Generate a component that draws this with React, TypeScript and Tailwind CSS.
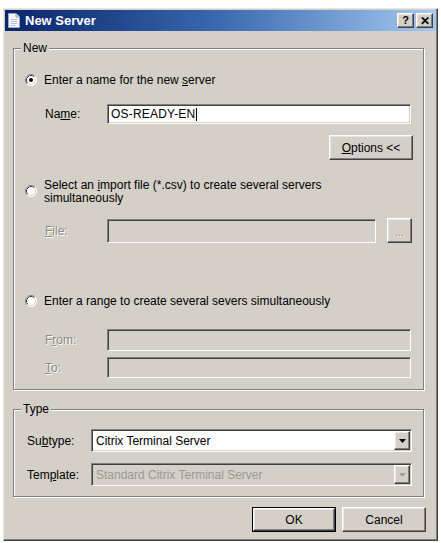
import React from 'react'

// classic 3D edge styles
const sunken =
  'border border-t-[#808080] border-l-[#808080] border-b-white border-r-white shadow-[inset_1px_1px_0_#404040,inset_-1px_-1px_0_#d4d0c8]'
const raised =
  'border border-t-white border-l-white border-b-[#404040] border-r-[#404040] shadow-[inset_-1px_-1px_0_#808080,inset_1px_1px_0_#e8e6e2]'
const grayed = 'text-[#8c8a85] [text-shadow:1px_1px_0_#ffffff]'

function Radio({ checked = false }: { checked?: boolean }) {
  return (
    <svg width="12" height="12" viewBox="0 0 12 12" className="shrink-0">
      <circle cx="6" cy="6" r="5.5" fill="#ffffff" />
      <path d="M9.89 2.11 A5.5 5.5 0 0 0 2.11 9.89" fill="none" stroke="#808080" />
      <path d="M9.18 2.82 A4.5 4.5 0 0 0 2.82 9.18" fill="none" stroke="#404040" />
      <path d="M2.11 9.89 A5.5 5.5 0 0 0 9.89 2.11" fill="none" stroke="#ffffff" />
      <path d="M2.82 9.18 A4.5 4.5 0 0 0 9.18 2.82" fill="none" stroke="#d4d0c8" />
      {checked && <circle cx="6" cy="6" r="2" fill="#000000" />}
    </svg>
  )
}

function DownArrow({ disabled = false }: { disabled?: boolean }) {
  return (
    <svg width="7" height="4" viewBox="0 0 7 4">
      <polygon points="0,0 7,0 3.5,4" fill={disabled ? '#a09e99' : '#000000'} />
    </svg>
  )
}

function GroupBox({ label, className, children }: { label: string; className: string; children: React.ReactNode }) {
  return (
    <div className={`relative w-[411px] border border-[#808080] shadow-[inset_1px_1px_0_#ffffff,1px_1px_0_#ffffff] ${className}`}>
      <span className="absolute left-[7px] -top-[8px] bg-[#d4d0c8] px-[2px] leading-[14px]">{label}</span>
      {children}
    </div>
  )
}

function ComboBox({ value, disabled = false }: { value: string; disabled?: boolean }) {
  return (
    <div className={`flex h-[23px] w-[321px] ${sunken} ${disabled ? 'bg-[#d4d0c8]' : 'bg-white'} p-[1px]`}>
      <span className={`flex flex-1 items-center pl-[3px] ${disabled ? 'text-[#9a9893]' : 'text-black'}`}>{value}</span>
      <span className={`flex w-[16px] items-center justify-center bg-[#d4d0c8] ${raised}`}>
        <DownArrow disabled={disabled} />
      </span>
    </div>
  )
}

function DocIcon() {
  return (
    <svg width="12" height="15" viewBox="0 0 12 15" className="shrink-0">
      <path d="M0.5 0.5 H8 L11.5 4 V14.5 H0.5 Z" fill="#f4f6fb" stroke="#9aa7c4" />
      <path d="M8 0.5 V4 H11.5" fill="#d6dcea" stroke="#9aa7c4" />
      <path d="M2.5 6.5 H9.5 M2.5 8.5 H9.5 M2.5 10.5 H9.5 M2.5 12.5 H7.5" stroke="#b8c2da" />
    </svg>
  )
}

export default function App() {
  return (
    <div className="h-[543px] w-[441px] bg-white pl-[3px] pt-[8px] font-['Liberation_Sans',Arial,sans-serif] text-[12px] text-black">
      <div className="flex h-[533px] w-[435px] flex-col border border-t-[#e8e6e2] border-l-[#e8e6e2] border-b-[#404040] border-r-[#404040] bg-[#d4d0c8] p-[1px] shadow-[inset_-1px_-1px_0_#808080]">
        {/* caption */}
        <div className="flex h-[21px] items-center bg-linear-to-r from-[#0a246a] via-[#3a6ab0] to-[#a6caf0] pl-[3px] pr-[3px]">
          <DocIcon />
          <span className="ml-[5px] text-[13px] font-bold text-white">New Server</span>
          <div className="ml-auto flex gap-[2px]">
            <span className={`flex h-[15px] w-[17px] items-center justify-center bg-[#d4d0c8] text-[11px] font-bold ${raised}`}>?</span>
            <span className={`flex h-[15px] w-[17px] items-center justify-center bg-[#d4d0c8] text-[12px] font-bold ${raised}`}>✕</span>
          </div>
        </div>

        {/* body */}
        <div className="flex flex-col pl-[8px]">
          <GroupBox label="New" className="mt-[17px] pb-[11px] pt-[23px]">
            <div className="flex h-[16px] items-center gap-[7px] pl-[11px]">
              <Radio checked />
              <span>Enter a name for the new <u>s</u>erver</span>
            </div>

            <div className="mt-[16px] flex h-[20px] items-center pl-[31px]">
              <span className="w-[62px]">Na<u>m</u>e:</span>
              <div className={`flex h-[20px] w-[304px] items-center bg-white pl-[3px] ${sunken}`}>
                <span className="tracking-[0.2px]">OS-READY-EN</span>
                <span className="ml-[1px] h-[13px] w-[1px] bg-black" />
              </div>
            </div>

            <div className="mt-[11px] flex justify-end pr-[10px]">
              <button className={`flex h-[25px] w-[84px] items-center justify-center bg-[#d4d0c8] ${raised}`}>
                <span><u>O</u>ptions &lt;&lt;</span>
              </button>
            </div>

            <div className="mt-[19px] flex items-start gap-[7px] pl-[11px]">
              <span className="mt-[6px]"><Radio /></span>
              <span className="leading-[13px]">
                Select an <u>i</u>mport file (*.csv) to create several servers
                <br />
                simultaneously
              </span>
            </div>

            <div className="mt-[13px] flex h-[25px] items-center pl-[31px]">
              <span className={`w-[62px] ${grayed}`}><u>F</u>ile:</span>
              <div className={`h-[24px] w-[269px] bg-[#d4d0c8] ${sunken}`} />
              <button className={`ml-[11px] flex h-[25px] w-[25px] items-end justify-center bg-[#d4d0c8] pb-[4px] text-[10px] leading-[10px] ${raised} ${grayed}`}>
                ...
              </button>
            </div>

            <div className="mt-[50px] flex h-[16px] items-center gap-[7px] pl-[11px]">
              <Radio />
              <span>Enter a ran<u>g</u>e to create several severs simultaneously</span>
            </div>

            <div className="mt-[20px] flex h-[22px] items-center pl-[31px]">
              <span className={`w-[62px] ${grayed}`}>F<u>r</u>om:</span>
              <div className={`h-[22px] w-[304px] bg-[#d4d0c8] ${sunken}`} />
            </div>

            <div className="mt-[6px] flex h-[21px] items-center pl-[31px]">
              <span className={`w-[62px] ${grayed}`}><u>T</u>o:</span>
              <div className={`h-[21px] w-[304px] bg-[#d4d0c8] ${sunken}`} />
            </div>
          </GroupBox>

          <GroupBox label="Type" className="mt-[19px] pb-[10px] pt-[19px]">
            <div className="flex h-[23px] items-center pl-[13px]">
              <span className="w-[64px]">Su<u>b</u>type:</span>
              <ComboBox value="Citrix Terminal Server" />
            </div>
            <div className="mt-[11px] flex h-[23px] items-center pl-[13px]">
              <span className="w-[64px]">Tem<u>p</u>late:</span>
              <ComboBox value="Standard Citrix Terminal Server" disabled />
            </div>
          </GroupBox>

          <div className="mt-[10px] flex justify-end gap-[6px] pr-[10px]">
            <div className="h-[25px] w-[84px] border border-black">
              <button className={`flex h-full w-full items-center justify-center bg-[#d4d0c8] ${raised}`}>OK</button>
            </div>
            <button className={`flex h-[25px] w-[84px] items-center justify-center bg-[#d4d0c8] ${raised}`}>Cancel</button>
          </div>
        </div>
      </div>
    </div>
  )
}
